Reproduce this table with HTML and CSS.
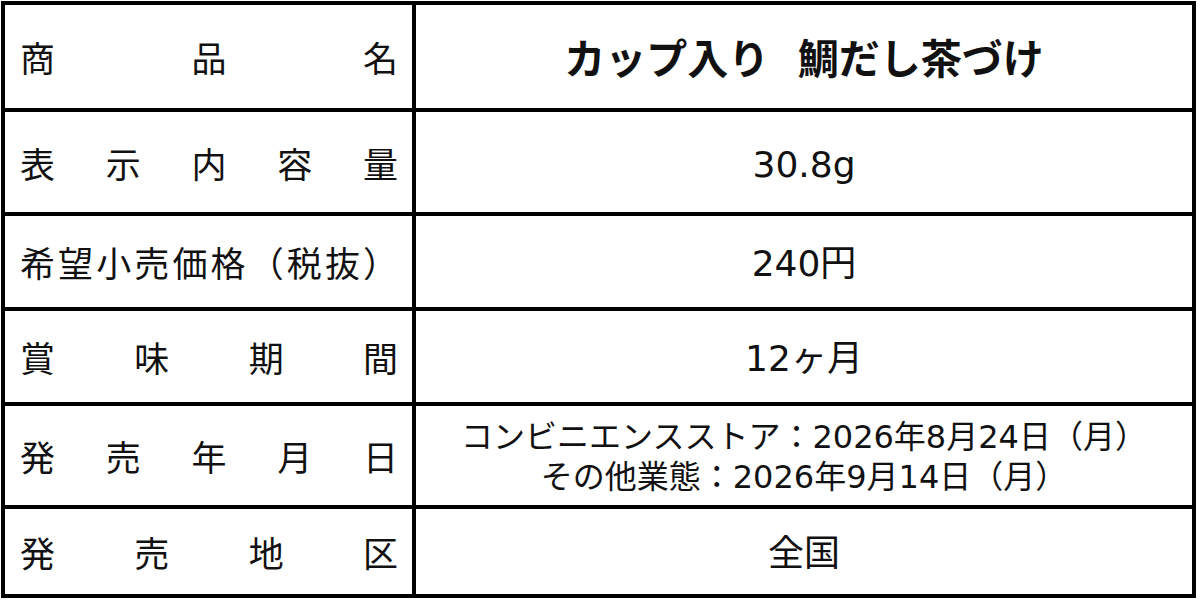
FILE: index.html
```html
<!DOCTYPE html>
<html lang="ja">
<head>
<meta charset="utf-8">
<link rel="stylesheet" href="styles.css">
</head>
<body>
<div class="sheet">
  <div class="label"><span>商</span><span>品</span><span>名</span></div>
  <div class="value title">カップ入り  鯛だし茶づけ</div>

  <div class="label"><span>表</span><span>示</span><span>内</span><span>容</span><span>量</span></div>
  <div class="value">30.8g</div>

  <div class="label"><span>希</span><span>望</span><span>小</span><span>売</span><span>価</span><span>格</span><span>（</span><span>税</span><span>抜</span><span>）</span></div>
  <div class="value">240円</div>

  <div class="label"><span>賞</span><span>味</span><span>期</span><span>間</span></div>
  <div class="value">12ヶ月</div>

  <div class="label"><span>発</span><span>売</span><span>年</span><span>月</span><span>日</span></div>
  <div class="value dates"><div>コンビニエンスストア：2026年8月24日（月）</div><div>その他業態：2026年9月14日（月）</div></div>

  <div class="label"><span>発</span><span>売</span><span>地</span><span>区</span></div>
  <div class="value">全国</div>
</div>
</body>
</html>
```

FILE: styles.css
```css
html, body {
  margin: 0;
  padding: 0;
  background: #fff;
}
body {
  font-family: "DejaVu Sans", "Noto Sans CJK JP", sans-serif;
  color: #111;
}
.sheet {
  margin: 1px 0 0 1px;
  width: 1195px;
  box-sizing: border-box;
  display: grid;
  grid-template-columns: 407px 776px;
  grid-template-rows: 103px 100px 91px 91px 99px 85px;
  gap: 4px;
  padding: 4px;
  background: #000;
}
.label, .value {
  background: #fff;
  display: flex;
  align-items: center;
}
.label {
  justify-content: space-between;
  padding: 0 14px 0 15px;
  font-family: "Noto Sans CJK JP", sans-serif;
  font-size: 35px;
  line-height: 1;
}
.value {
  justify-content: center;
  padding-top: 5px;
  font-size: 36px;
  line-height: 1;
  white-space: pre;
}
.title {
  padding-top: 8px;
  font-weight: 700;
  font-size: 41px;
}
.dates {
  flex-direction: column;
  padding-top: 2px;
  font-size: 32px;
  line-height: 40px;
}
```
